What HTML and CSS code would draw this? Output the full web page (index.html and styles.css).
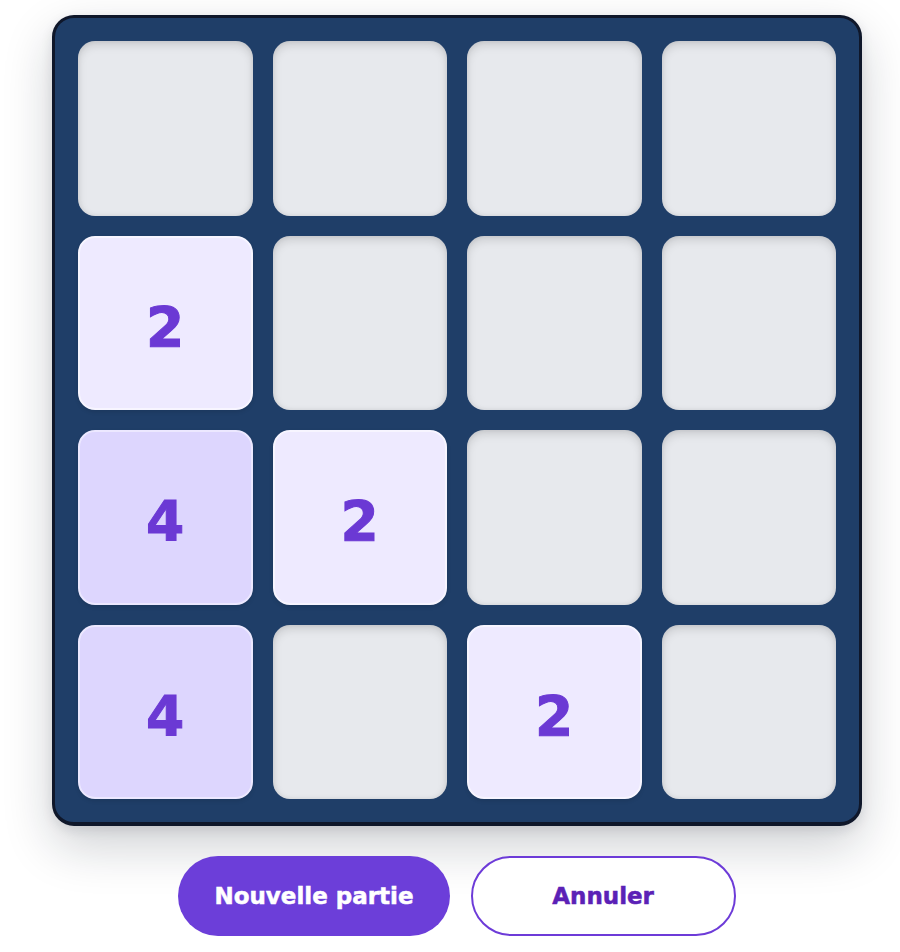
FILE: index.html
```html
<!DOCTYPE html>
<html lang="fr">
<head>
<meta charset="utf-8">
<title>2048</title>
<link rel="stylesheet" href="styles.css">
</head>
<body>
<main class="game">
  <div class="board">
    <div class="tile"></div>
    <div class="tile"></div>
    <div class="tile"></div>
    <div class="tile"></div>

    <div class="tile tile-2">2</div>
    <div class="tile"></div>
    <div class="tile"></div>
    <div class="tile"></div>

    <div class="tile tile-4">4</div>
    <div class="tile tile-2">2</div>
    <div class="tile"></div>
    <div class="tile"></div>

    <div class="tile tile-4">4</div>
    <div class="tile"></div>
    <div class="tile tile-2">2</div>
    <div class="tile"></div>
  </div>
  <div class="actions">
    <button class="btn btn-primary" type="button">Nouvelle partie</button>
    <button class="btn btn-outline" type="button">Annuler</button>
  </div>
</main>
</body>
</html>
```
FILE: styles.css
```css
html, body {
  margin: 0;
  background: #ffffff;
}

body {
  font-family: "DejaVu Sans", "Liberation Sans", sans-serif;
  font-weight: bold;
}

.game {
  display: flex;
  flex-direction: column;
  align-items: center;
  padding: 15px 38px 0 52px;
  box-sizing: border-box;
  width: 900px;
}

.board {
  width: 810px;
  box-sizing: border-box;
  display: grid;
  grid-template-columns: repeat(4, 1fr);
  gap: 20px;
  padding: 23px;
  background: #1f3e68;
  border: 3px solid #0f172a;
  border-bottom-width: 4px;
  border-radius: 22px;
  box-shadow: 0 20px 50px rgba(15, 23, 42, 0.2), 0 4px 12px rgba(15, 23, 42, 0.1);
}

/* empty cell: recessed look */
.tile {
  aspect-ratio: 1 / 1;
  border-radius: 17px;
  background: #e7e9ed;
  box-shadow: inset 0 4px 10px rgba(0, 0, 0, 0.13), inset 0 0 5px rgba(0, 0, 0, 0.07);
  display: flex;
  align-items: center;
  justify-content: center;
  padding-top: 8px;
  font-size: 55px;
  color: #6b39d4;
  -webkit-text-stroke: 1px #6b39d4;
  box-sizing: border-box;
}

.tile-2 {
  background: #eeeaff;
  border: 2px solid #f7f5ff;
  box-shadow: 0 2px 4px rgba(0, 0, 0, 0.1);
}

.tile-4 {
  background: #ddd6fe;
  border: 2px solid #ece8ff;
  box-shadow: 0 2px 4px rgba(0, 0, 0, 0.1);
}

.actions {
  display: flex;
  gap: 21px;
  margin-top: 30px;
}

.btn {
  height: 80px;
  min-width: 265px;
  padding: 0 36px;
  box-sizing: border-box;
  border-radius: 40px;
  font-family: "DejaVu Sans", sans-serif;
  font-weight: bold;
  font-size: 23px;
  cursor: pointer;
}

.btn-primary {
  background: #6c3ed9;
  color: #ffffff;
  -webkit-text-stroke: 0.5px #ffffff;
  border: none;
}

.btn-outline {
  background: #ffffff;
  color: #5b21b6;
  -webkit-text-stroke: 0.5px #5b21b6;
  border: 2px solid #6d3bd8;
}
```
